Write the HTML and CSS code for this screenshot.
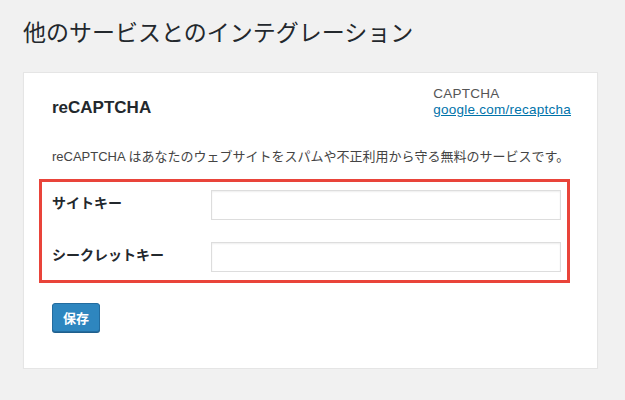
FILE: index.html
```html
<!DOCTYPE html>
<html lang="ja">
    <head>
        <meta charset="UTF-8">
        <meta name="viewport" content="width=device-width, initial-scale=1.0">
        <title>他のサービスとのインテグレーション</title>
        <link rel="stylesheet" href="styles.css">
    </head>
<body>
    <section class="wrap">
        <h1 class="page-title">他のサービスとのインテグレーション</h1>

        <div class="card">
            <div class="card-head">
                <h2 class="card-title">reCAPTCHA</h2>
                <div class="card-meta">
                    <div>CAPTCHA</div>
                    <a href="#">google.com/recaptcha</a>
                </div>
            </div>

            <p class="card-desc">reCAPTCHA はあなたのウェブサイトをスパムや不正利用から守る無料のサービスです。</p>

            <div class="highlight">
                <div class="field-row">
                    <label class="field-label" for="site-key">サイトキー</label>
                    <input class="field-input" type="text" id="site-key">
                </div>
                <div class="field-row">
                    <label class="field-label" for="secret-key">シークレットキー</label>
                    <input class="field-input" type="text" id="secret-key">
                </div>
            </div>

            <button class="button-primary" type="button">保存</button>
        </div>
    </section>
</body>
</html>
```

FILE: styles.css
```css
body {
    margin: 0;
    background-color: #f1f1f1;
    color: #444444;
    font-family: "Liberation Sans", "Noto Sans CJK JP", sans-serif;
    font-size: 13px;
}

.wrap {
    padding: 18px 27px 0 23px;
}

.page-title {
    margin: 0 0 24px 0;
    font-size: 23px;
    font-weight: 400;
    line-height: 30px;
    color: #23282d;
}

.card {
    background-color: #ffffff;
    border: 1px solid #e5e5e5;
    box-shadow: 0 1px 1px rgba(0, 0, 0, 0.04);
    padding: 13px 26px 36px 28px;
}

.card-head {
    display: flex;
    justify-content: space-between;
    align-items: flex-end;
}

.card-title {
    margin: 0;
    font-size: 17px;
    font-weight: 700;
    line-height: 20px;
    color: #23282d;
}

.card-meta {
    font-size: 13.5px;
    letter-spacing: 0.25px;
    line-height: 16px;
    color: #555555;
}

.card-meta a {
    color: #0073aa;
    text-decoration: underline;
}

.card-desc {
    margin: 29px 0 12px 0;
    line-height: 20px;
}

.highlight {
    margin-left: -13px;
    margin-right: 1px;
    border: 3px solid #e9443a;
    padding: 8px 7px 8px 10px;
    display: flex;
    flex-direction: column;
    gap: 22px;
}

.field-row {
    display: grid;
    grid-template-columns: 159px 1fr;
    align-items: start;
}

.field-label {
    padding-top: 3px;
    font-size: 14px;
    font-weight: 700;
    line-height: 20px;
    color: #23282d;
}

.field-input {
    box-sizing: border-box;
    width: 350px;
    height: 30px;
    margin: 0;
    border: 1px solid #dddddd;
    box-shadow: inset 0 1px 2px rgba(0, 0, 0, 0.07);
    background-color: #ffffff;
}

.button-primary {
    margin-top: 20px;
    height: 29px;
    padding: 0 10px;
    background-color: #2e86bf;
    border: 1px solid #236c9f;
    border-radius: 3px;
    box-shadow: 0 1px 0 #1f5f8c;
    color: #ffffff;
    font-family: "Liberation Sans", "Noto Sans CJK JP", sans-serif;
    font-size: 13px;
    font-weight: 700;
}
```
